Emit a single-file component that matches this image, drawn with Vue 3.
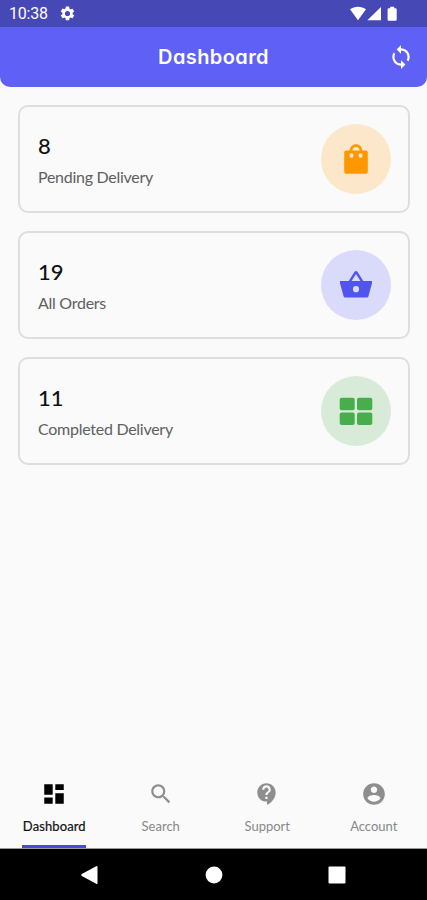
<script setup>
const cards = [
  { value: 8, label: 'Pending Delivery', tone: 'orange' },
  { value: 19, label: 'All Orders', tone: 'blue' },
  { value: 11, label: 'Completed Delivery', tone: 'green' },
]
const tabs = [
  { label: 'Dashboard', active: true, path: 'M3 12.7h7.8V3H3zM3 21h7.8v-5.8H3zM13.2 21H21v-9.8h-7.8zM13.2 3v5.4H21V3z' },
  { label: 'Search', path: 'M15.5 14h-.79l-.28-.27C15.41 12.59 16 11.11 16 9.5 16 5.91 13.09 3 9.5 3S3 5.91 3 9.5 5.91 16 9.5 16c1.61 0 3.09-.59 4.23-1.57l.27.28v.79l5 4.99L20.49 19l-4.99-5zm-6 0C7.01 14 5 11.99 5 9.5S7.01 5 9.5 5 14 7.01 14 9.5 11.99 14 9.5 14z' },
  { label: 'Support', path: 'M11.5 2C6.81 2 3 5.81 3 10.5S6.81 19 11.5 19h.5v3c4.86-2.34 8-7 8-11.5C20 5.81 16.19 2 11.5 2zm1 14.5h-2v-2h2v2zm0-3.5h-2c0-3.25 3-3 3-5 0-1.1-.9-2-2-2s-2 .9-2 2h-2c0-2.21 1.79-4 4-4s4 1.79 4 4c0 2.5-3 2.75-3 5z' },
  { label: 'Account', path: 'M12 2C6.48 2 2 6.48 2 12s4.48 10 10 10 10-4.48 10-10S17.52 2 12 2zm0 3c1.66 0 3 1.34 3 3s-1.34 3-3 3-3-1.34-3-3 1.34-3 3-3zm0 14.2c-2.5 0-4.71-1.28-6-3.22.03-1.99 4-3.08 6-3.08 1.99 0 5.97 1.09 6 3.08-1.29 1.94-3.5 3.22-6 3.22z' },
]
</script>

<template>
  <div class="screen">
    <div class="status">
      <span class="time">10:38</span>
      <svg class="gear" viewBox="0 0 24 24"><path d="M19.14 12.94c.04-.3.06-.61.06-.94s-.02-.64-.07-.94l2.03-1.58a.5.5 0 0 0 .12-.61l-1.92-3.32a.5.5 0 0 0-.59-.22l-2.39.96a7 7 0 0 0-1.62-.94l-.36-2.54A.5.5 0 0 0 13.92 2h-3.84a.5.5 0 0 0-.47.41l-.36 2.54a7 7 0 0 0-1.62.94l-2.39-.96a.5.5 0 0 0-.59.22L2.74 8.87a.5.5 0 0 0 .12.61l2.03 1.58a6 6 0 0 0 0 1.88l-2.03 1.58a.5.5 0 0 0-.12.61l1.92 3.32c.12.22.37.29.59.22l2.39-.96c.5.38 1.03.7 1.62.94l.36 2.54c.05.24.24.41.47.41h3.84c.24 0 .44-.17.47-.41l.36-2.54a7 7 0 0 0 1.62-.94l2.39.96c.22.08.47 0 .59-.22l1.92-3.32a.5.5 0 0 0-.12-.61zM12 15.6a3.6 3.6 0 1 1 0-7.2 3.6 3.6 0 0 1 0 7.2z" /></svg>
      <svg class="signals" viewBox="0 0 50 16">
        <path d="M0 3.3C4.5-.2 11.5-.2 16 3.3L8 14.2z" />
        <path d="M31 1v13.3H17.3z" />
        <path d="M40.2.8h4v1.4h1.3a1.2 1.2 0 0 1 1.2 1.2v10.2a1.2 1.2 0 0 1-1.2 1.2h-6.700a1.2 1.2 0 0 1-1.2-1.2V3.4a1.2 1.2 0 0 1 1.2-1.2h1.400z" />
      </svg>
    </div>
    <header class="header">
      <h1>Dashboard</h1>
      <svg class="sync" viewBox="0 0 24 24"><path d="M12 4V1L8 5l4 4V6c3.31 0 6 2.69 6 6 0 1.01-.25 1.97-.7 2.8l1.46 1.46C19.54 15.03 20 13.57 20 12c0-4.42-3.58-8-8-8zm0 14c-3.31 0-6-2.69-6-6 0-1.01.25-1.97.7-2.8L5.24 7.74C4.46 8.97 4 10.43 4 12c0 4.42 3.58 8 8 8v3l4-4-4-4v3z" /></svg>
    </header>
    <main class="content">
      <section v-for="card in cards" :key="card.label" class="card">
        <div class="info">
          <span class="value">{{ card.value }}</span>
          <span class="label">{{ card.label }}</span>
        </div>
        <div class="badge" :class="card.tone">
          <svg v-if="card.tone === 'orange'" viewBox="0 0 36 36">
            <path fill-rule="evenodd" d="M8.2 9.5h3.5C12 5.800 14.600 3.300 18 3.300s6 2.500 6.300 6.200h3.500a2 2 0 0 1 2 2v19.200a2 2 0 0 1-2 2H8.200a2 2 0 0 1-2-2V11.500a2 2 0 0 1 2-2zM14.300 9.500h7.400C21.400 7.200 20 5.900 18 5.900s-3.400 1.300-3.700 3.600zM13.500 12.300a2 2.300 0 1 0 0 4.600 2 2.300 0 0 0 0-4.600zM22.500 12.300a2 2.300 0 1 0 0 4.600 2 2.300 0 0 0 0-4.600z" />
          </svg>
          <svg v-else-if="card.tone === 'blue'" viewBox="0 0 36 36">
            <path fill-rule="evenodd" d="M2 14h8.700l6-9.400c.6-.9 2-.9 2.600 0l6 9.400H34v2.200l-3.500 12.700c-.3 1.100-1 1.700-2.100 1.700H7.600c-1.100 0-1.800-.6-2.100-1.700L2 16.200zM13.500 14h9L18 6.900zM18 19.100a3.100 3.100 0 1 0 0 6.200 3.100 3.100 0 0 0 0-6.200z" />
          </svg>
          <svg v-else viewBox="0 0 36 36">
            <rect x="1.700" y="4.800" width="15" height="12.400" rx="2" />
            <rect x="19" y="4.800" width="15.300" height="12.400" rx="2" />
            <rect x="1.700" y="19.500" width="15" height="12.400" rx="2" />
            <rect x="19" y="19.500" width="15.300" height="12.400" rx="2" />
          </svg>
        </div>
      </section>
    </main>
    <nav class="tabs">
      <div v-for="tab in tabs" :key="tab.label" class="tab" :class="{ active: tab.active }">
        <svg viewBox="0 0 24 24"><path :d="tab.path" /></svg>
        <span>{{ tab.label }}</span>
        <i class="indicator"></i>
      </div>
    </nav>
    <div class="system">
      <svg viewBox="0 0 20 20"><path d="M17.500 2v16q0 1.300-1.300.700L1.800 10.900q-1.300-.900 0-1.800L16.200 1.300q1.300-.600 1.300.700z" /></svg>
      <svg viewBox="0 0 20 20"><circle cx="10" cy="10" r="8.400" /></svg>
      <svg viewBox="0 0 20 20"><rect x="1.500" y="1.500" width="17" height="17" rx="1" /></svg>
    </div>
  </div>
</template>

<style>
body { margin: 0; }
</style>

<style scoped>
.screen {
  display: flex;
  flex-direction: column;
  width: 427px;
  height: 900px;
  overflow: hidden;
  background: #fafafa;
  font-family: Lato, sans-serif;
}
.status {
  display: flex;
  align-items: center;
  flex: 0 0 27px;
  box-sizing: border-box;
  padding: 0 27px 0 9px;
  background: #4648b6;
  color: #fff;
  fill: #fff;
}
.time {
  width: 50px;
  font: 400 16px/27px Roboto, sans-serif;
  letter-spacing: -.2px;
}
.gear { width: 17px; height: 17px; }
.signals { width: 50px; height: 16px; margin-left: auto; }
.header {
  display: grid;
  grid-template-columns: 40px 1fr 40px;
  align-items: center;
  flex: 0 0 60px;
  box-sizing: border-box;
  padding: 0 6px;
  border-radius: 0 0 10px 10px;
  background: #5e60f6;
}
h1 {
  grid-column: 2;
  margin: 0;
  text-align: center;
  color: #fff;
  font: 600 20px/60px Inter, sans-serif;
  font-feature-settings: "cv11";
  letter-spacing: .4px;
}
.sync { width: 26px; height: 26px; margin-left: 7px; fill: #fff; }
.content {
  display: flex;
  flex-direction: column;
  flex: 1;
  gap: 18px;
  padding: 18px 17px 0 18px;
}
.card {
  display: flex;
  align-items: center;
  justify-content: space-between;
  box-sizing: border-box;
  height: 108px;
  padding: 0 17px 0 18px;
  border: 2px solid #dedede;
  border-radius: 10px;
}
.info { display: flex; flex-direction: column; gap: 6px; }
.value { color: #111; font-size: 22px; font-weight: 500; line-height: 30px; }
.label { color: #606060; font-size: 16px; line-height: 20px; letter-spacing: -.27px; }
.badge {
  display: grid;
  place-items: center;
  width: 70px;
  height: 70px;
  border-radius: 50%;
}
.badge svg { width: 36px; height: 36px; }
.orange { background: #fce7ca; fill: #ff9800; }
.blue { background: #dadafb; fill: #5254ee; }
.green { background: #d7ebd8; fill: #47ae4b; }
.tabs {
  display: grid;
  grid-template-columns: repeat(4, 1fr);
  flex: 0 0 80px;
  box-sizing: border-box;
  padding-left: 1px;
  border-bottom: 1px solid #999;
}
.tab {
  display: flex;
  flex-direction: column;
  align-items: center;
  color: #888;
  fill: #8e8e8e;
  font-size: 13px;
}
.tab svg { width: 26px; height: 26px; margin-top: 12px; }
.tab span { margin-top: 11px; line-height: 16px; }
.indicator { width: 64px; height: 3px; margin-top: auto; }
.active { color: #111; fill: #000; }
.active span { letter-spacing: .1px; -webkit-text-stroke: .2px #111; }
.active .indicator { background: #474bd6; }
.system {
  display: flex;
  align-items: center;
  justify-content: space-between;
  flex: 0 0 51px;
  box-sizing: border-box;
  padding: 0 80px;
  background: #000;
  fill: #fff;
}
.system svg { width: 20px; height: 20px; }
</style>
